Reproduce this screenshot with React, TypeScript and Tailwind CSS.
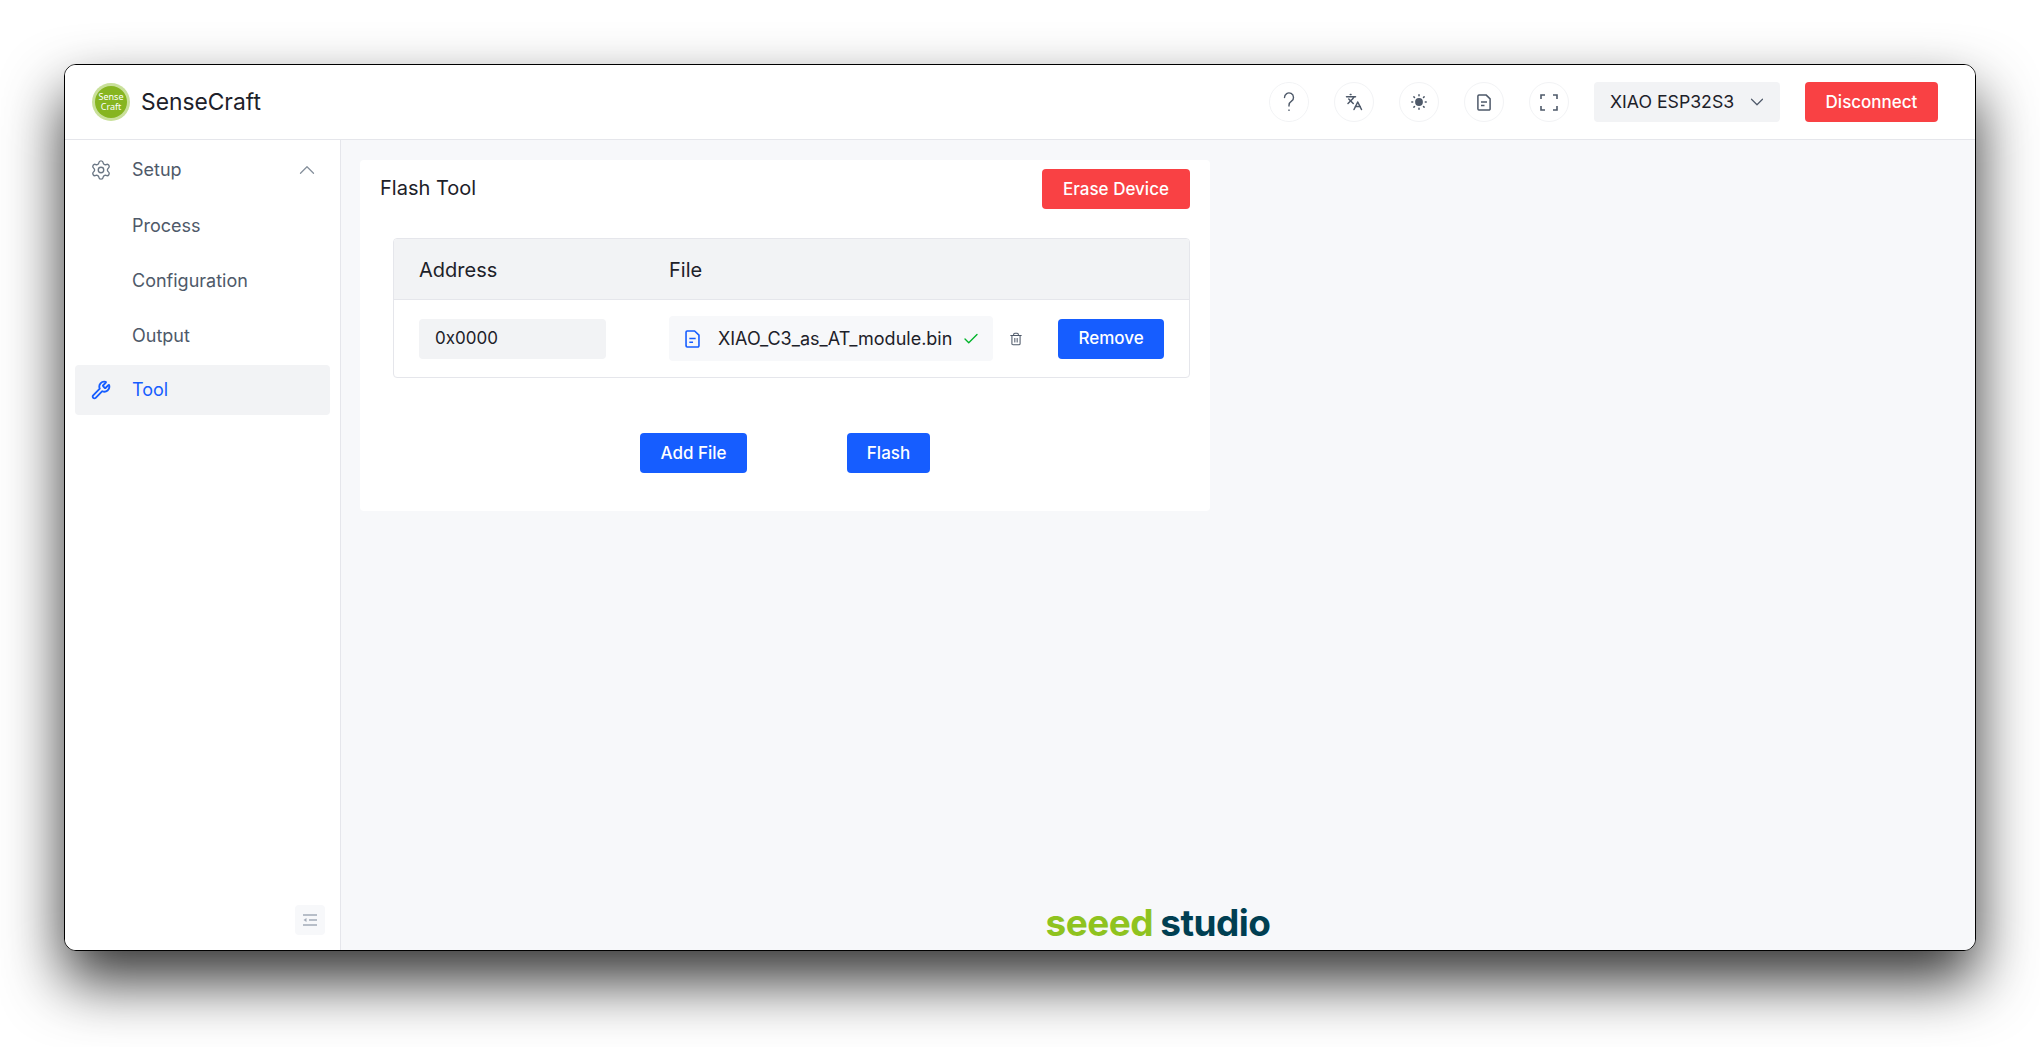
import { ChevronDown, ChevronUp, Check, Languages, Settings, Trash2, Wrench } from "lucide-react";

const fontClass = "font-['Inter','Noto_Sans','Liberation_Sans',sans-serif]";

const CircleIcon = ({ children }: { children: React.ReactNode }) => (
    <button className="w-10 h-10 rounded-full border border-[#f2f3f5] flex items-center justify-center text-[#4e5969]">
        {children}
    </button>
);

const FileIcon = ({ className }: { className: string }) => (
    <svg className={className} viewBox="0 0 14 17" fill="none" stroke="currentColor" strokeWidth="1.5" strokeLinejoin="round">
        <path d="M2 .9h7l4.1 4v10a1.2 1.2 0 0 1-1.2 1.2H2A1.2 1.2 0 0 1 .9 15V2A1.2 1.2 0 0 1 2 .9z" />
        <path d="M4 8h6M4 11.5h3.5" />
    </svg>
);

const Header = () => (
    <header className="h-[75px] shrink-0 bg-white border-b border-[#e5e6eb] flex items-center pl-[27px] pr-[37px]">
        <div className="w-[38px] h-[38px] rounded-full bg-[#c9e09a] flex items-center justify-center">
            <div className="w-8 h-8 rounded-full bg-[#86b520] flex flex-col items-center justify-center text-white text-[9px] leading-[10px] font-['Noto_Sans',sans-serif]">
                <span>Sense</span>
                <span>Craft</span>
            </div>
        </div>
        <span className="ml-[11px] text-[22.8px] text-[#1d2129]">SenseCraft</span>
        <div className="ml-auto flex items-center">
            <div className="flex items-center gap-[25px]">
                <CircleIcon>
                    <svg className="w-5 h-6" viewBox="0 0 20 24" fill="none" stroke="currentColor" strokeWidth="1.4" strokeLinecap="round">
                        <path d="M5.5 7.5a4.5 4.5 0 1 1 7 3.7c-1.6 1.1-2.5 2-2.5 4v.8" />
                        <path d="M10 20v.4" />
                    </svg>
                </CircleIcon>
                <CircleIcon>
                    <Languages className="w-[18px] h-[18px]" strokeWidth={2} />
                </CircleIcon>
                <CircleIcon>
                    <svg className="w-[16px] h-[16px]" viewBox="0 0 16 16" fill="currentColor">
                        <circle cx="8" cy="8" r="3.9" />
                        <path d="M8 .8v.9M8 14.3v.9M.8 8h.9M14.3 8h.9M2.9 2.9l.6.6M12.5 12.5l.6.6M2.9 13.1l.6-.6M12.5 3.5l.6-.6" stroke="currentColor" strokeWidth="1.5" strokeLinecap="round" />
                    </svg>
                </CircleIcon>
                <CircleIcon>
                    <FileIcon className="w-[14px] h-[17px]" />
                </CircleIcon>
                <CircleIcon>
                    <svg className="w-[18px] h-[17px]" viewBox="0 0 18 17" fill="none" stroke="currentColor" strokeWidth="1.6">
                        <path d="M1 5V1h4M13 1h4v4M17 12v4h-4M5 16H1v-4" />
                    </svg>
                </CircleIcon>
            </div>
            <div className="ml-[25px] w-[186px] h-10 rounded-sm bg-[#f2f3f5] flex items-center justify-between pl-4 pr-3 text-[17.7px] text-[#1d2129]">
                <span>XIAO ESP32S3</span>
                <ChevronDown className="w-[22px] h-[22px] text-[#4e5969]" strokeWidth={1.3} />
            </div>
            <button className="ml-[25px] w-[133px] h-10 pt-px rounded-sm bg-[#f94144] text-white text-[17px] font-medium">Disconnect</button>
        </div>
    </header>
);

const navItems = ["Process", "Configuration", "Output"];

const Sidebar = () => (
    <aside className="w-[276px] shrink-0 bg-white border-r border-[#e5e6eb] flex flex-col pt-[5px] pl-[10px] pr-[10px] pb-[15px]">
        <div className="h-[50px] flex items-center pl-[15px] pr-[10px] text-lg text-[#4e5969]">
            <Settings className="w-[22px] h-[22px] text-[#6b7785]" strokeWidth={1.5} />
            <span className="ml-[20px]">Setup</span>
            <ChevronUp className="ml-auto w-[26px] h-[26px] text-[#86909c]" strokeWidth={1.2} />
        </div>
        {navItems.map((item) => (
            <div key={item} className="mt-[5px] h-[50px] pt-px flex items-center pl-[57px] text-lg text-[#4e5969]">
                {item}
            </div>
        ))}
        <div className="mt-[5px] h-[50px] rounded-sm bg-[#f2f3f5] flex items-center pl-4 text-lg text-[#165dff]">
            <Wrench className="w-5 h-5" strokeWidth={2.2} />
            <span className="ml-[21px]">Tool</span>
        </div>
        <button className="mt-auto self-end mr-[5px] w-[30px] h-[30px] rounded-sm bg-[#f7f8fa] flex items-center justify-center">
            <svg className="w-[14px] h-3" viewBox="0 0 14 12" fill="none" stroke="#a3abb8" strokeWidth="1.3">
                <path d="M0 1h14M6 6h8M0 11h14" />
                <path d="M3.5 4v4L0.5 6z" fill="#a3abb8" stroke="none" />
            </svg>
        </button>
    </aside>
);

const FlashCard = () => (
    <section className="w-[850px] h-[351px] bg-white rounded-sm flex flex-col pl-[20px] pr-5 pt-[9px]">
        <div className="flex items-start justify-between">
            <h2 className="text-xl leading-[40px] text-[#1d2129] -mt-px">Flash Tool</h2>
            <button className="w-[148px] h-10 pt-px rounded-sm bg-[#f94144] text-white text-[17px] font-medium">Erase Device</button>
        </div>
        <div className="ml-[13px] mt-[29px] border border-[#e5e6eb] rounded-[4px] overflow-hidden">
            <div className="h-[61px] pt-px bg-[#f2f3f5] border-b border-[#e5e6eb] flex items-center pl-[25px] text-xl text-[#1d2129]">
                <span className="w-[250px]">Address</span>
                <span>File</span>
            </div>
            <div className="h-[77px] flex items-center pl-[25px]">
                <div className="w-[187px] h-10 pt-px rounded-sm bg-[#f2f3f5] flex items-center pl-4 text-[17px] text-[#1d2129]">0x0000</div>
                <div className="ml-[63px] w-[324px] h-[45px] pt-px rounded-sm bg-[#f7f8fa] flex items-center pl-4 text-lg text-[#1d2129]">
                    <FileIcon className="w-[15px] h-[18px] text-[#165dff]" />
                    <span className="ml-[18px] whitespace-nowrap">XIAO_C3_as_AT_module.bin</span>
                    <Check className="ml-[10px] w-[18px] h-[18px] text-[#00b42a]" strokeWidth={1.8} />
                </div>
                <Trash2 className="ml-4 w-[14px] h-[14px] text-[#4e5969]" strokeWidth={1.8} />
                <button className="ml-[35px] w-[106px] h-10 pt-px rounded-sm bg-[#165dff] text-white text-[17px] font-medium">Remove</button>
            </div>
        </div>
        <div className="mt-[55px] flex justify-center gap-[100px]">
            <button className="w-[107px] h-10 pt-px rounded-sm bg-[#165dff] text-white text-[17px] font-medium">Add File</button>
            <button className="w-[83px] h-10 pt-px rounded-sm bg-[#165dff] text-white text-[17px] font-medium">Flash</button>
        </div>
    </section>
);

export default function App() {
    return (
        <div className={`${fontClass} h-screen bg-white pl-[64px] pr-[64px] pt-[64px] pb-[96px]`}>
            <div className="h-full rounded-xl border border-black overflow-hidden flex flex-col bg-white shadow-[0_30px_60px_0_rgba(0,0,0,0.8)]">
                <Header />
                <div className="flex-1 flex min-h-0">
                    <Sidebar />
                    <main className="flex-1 bg-[#f7f8fa] flex flex-col pl-[19px] pt-[20px]">
                        <FlashCard />
                        <div className="mt-auto -ml-[19px] pb-[7px] flex justify-center items-baseline gap-[7px] text-[37px] leading-[40px] font-bold tracking-[-0.5px]">
                            <span className="text-[#8fc31f]">seeed</span>
                            <span className="text-[#003f52]">studio</span>
                        </div>
                    </main>
                </div>
            </div>
        </div>
    );
}
